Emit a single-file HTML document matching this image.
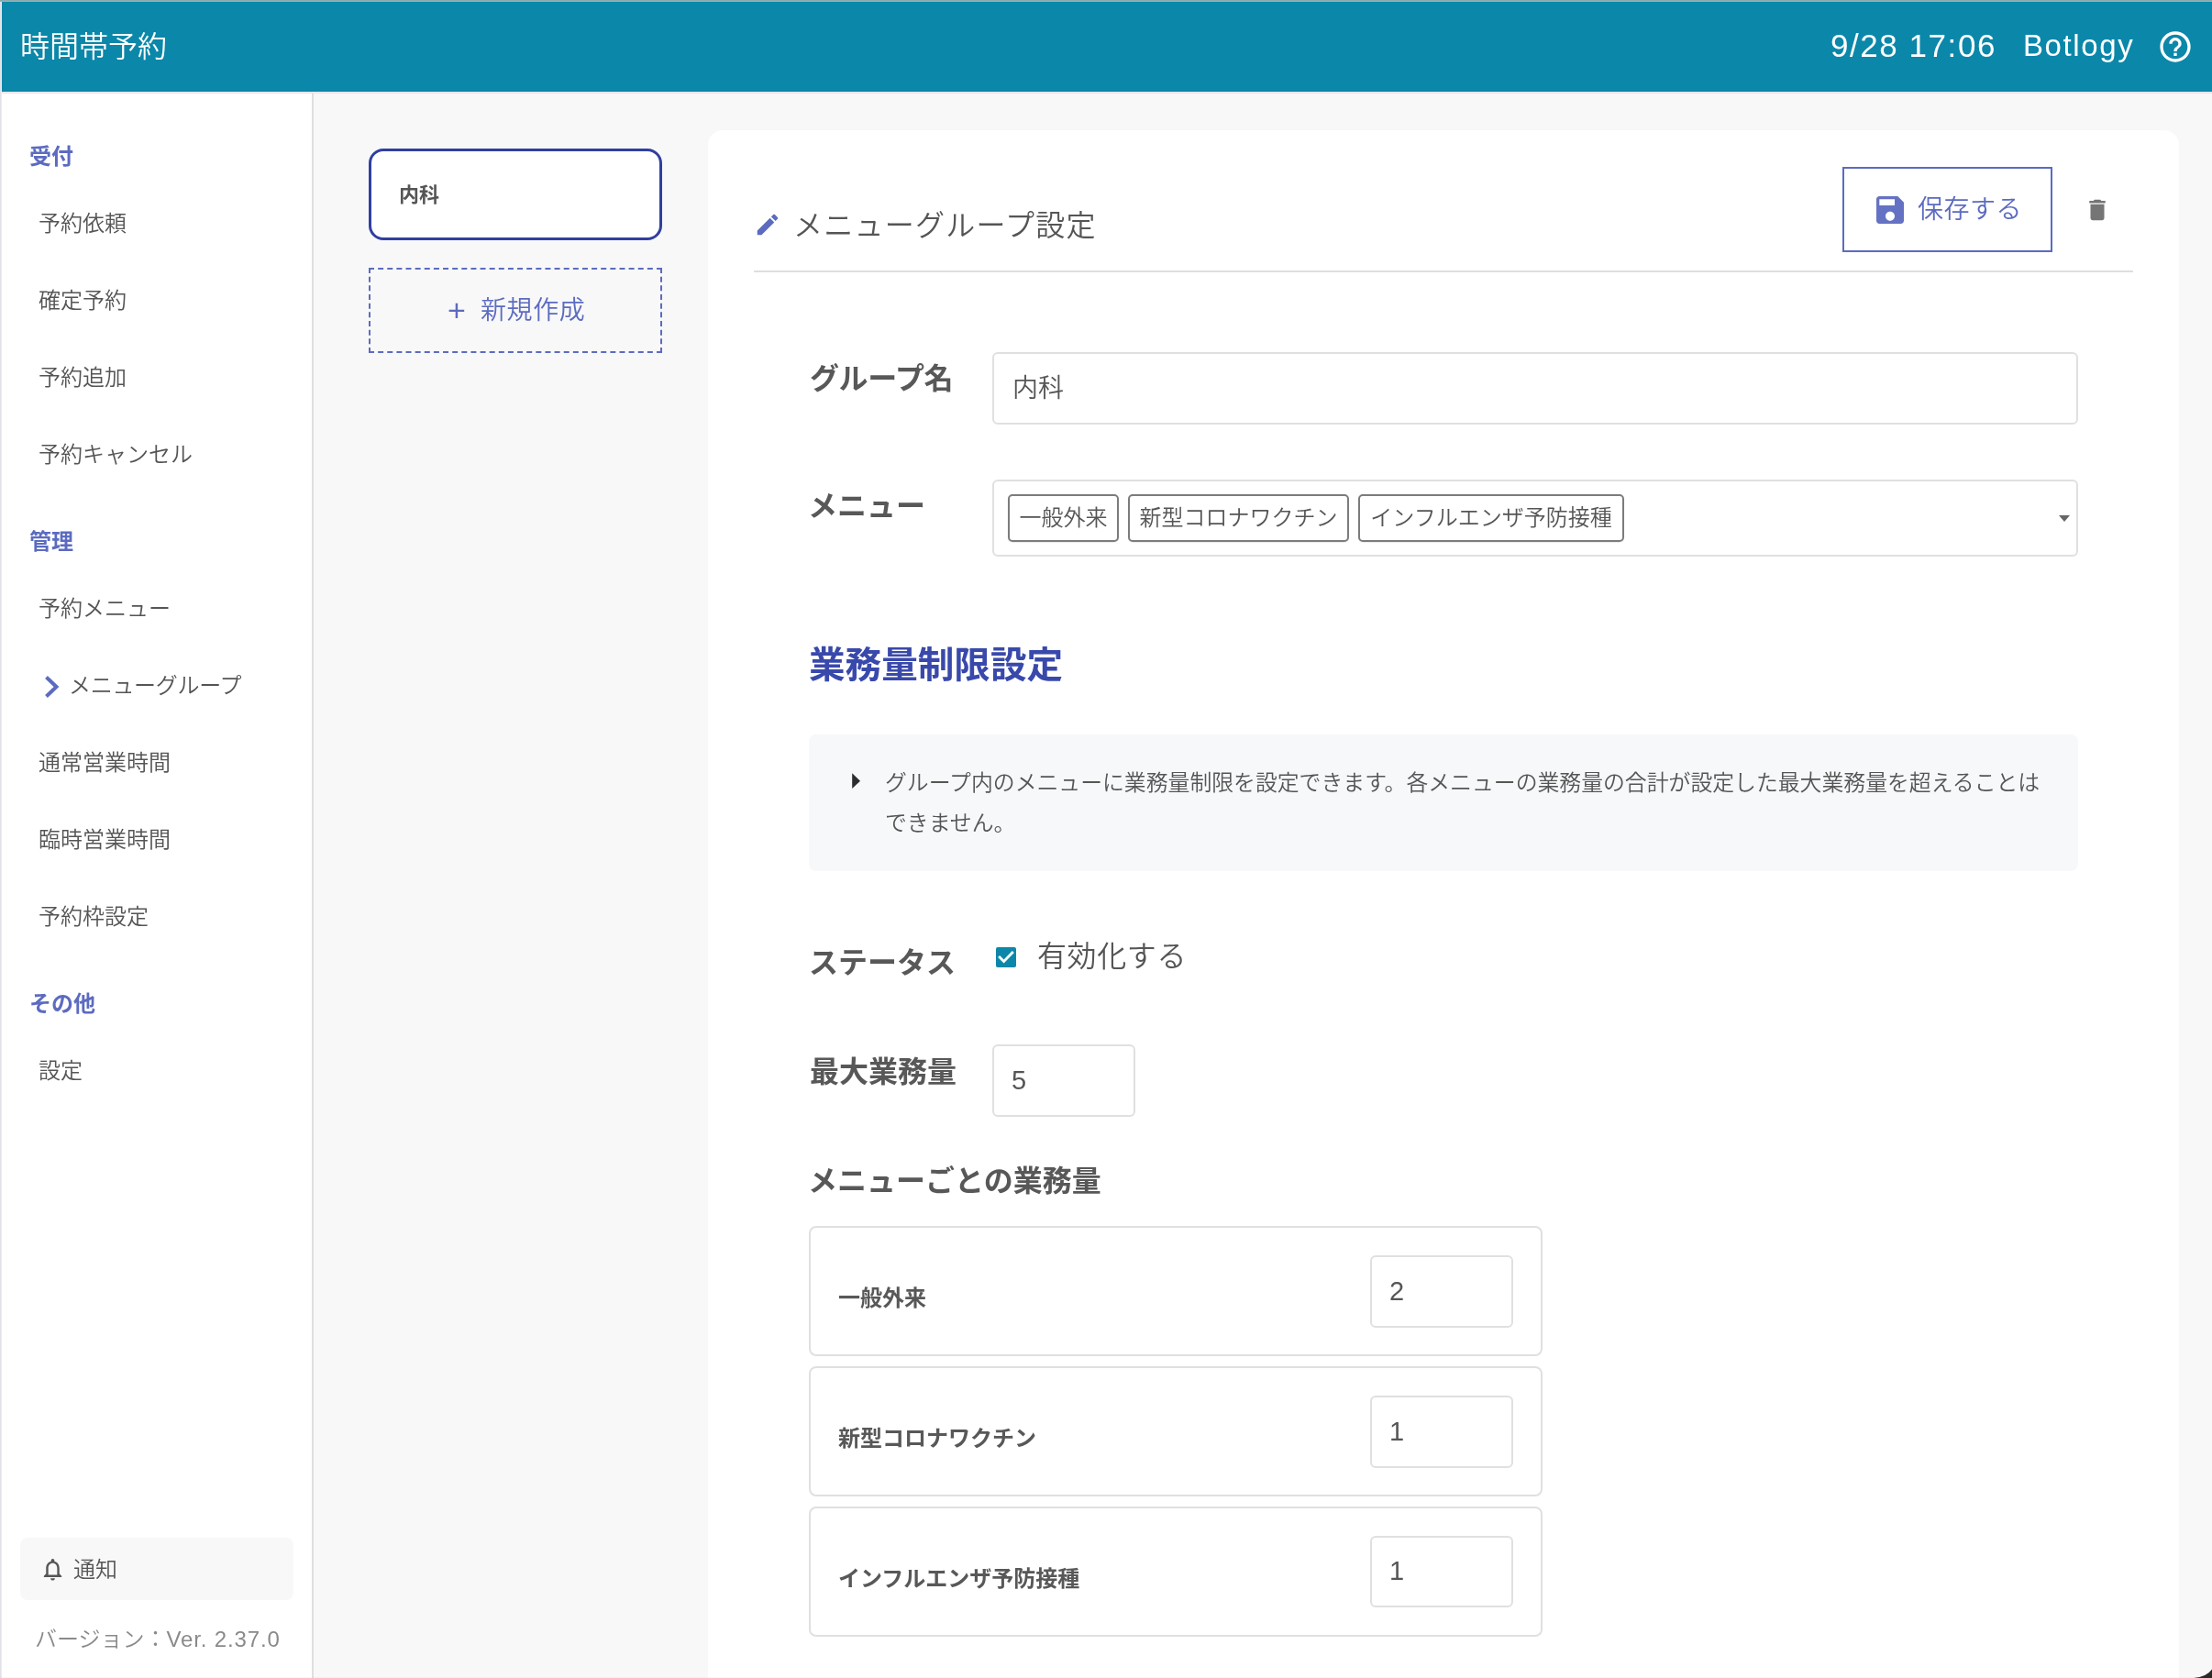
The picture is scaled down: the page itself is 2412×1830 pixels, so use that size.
<!DOCTYPE html>
<html lang="ja">
<head>
<meta charset="utf-8">
<title>時間帯予約</title>
<style>
*{box-sizing:border-box;margin:0;padding:0}
html,body{width:2412px;height:1830px;overflow:hidden;background:#f8f8f8}
body{font-family:"Liberation Sans","Noto Sans CJK JP",sans-serif;font-weight:350;color:#555;position:relative}
#app{position:absolute;left:0;top:0;width:2412px;height:1830px;overflow:hidden;background:#f8f8f8}
.a{position:absolute}
.t{position:absolute;white-space:nowrap;will-change:transform}
.b{font-weight:700}
/* frame lines */
#topline{left:0;top:0;width:2412px;height:2px;background:linear-gradient(#8aabad 0,#8aabad 50%,#99b3b4 50%,#99b3b4 100%)}
#leftline{left:0;top:2px;width:2px;height:1828px;background:linear-gradient(90deg,#e1e2e9 0,#e1e2e9 50%,#efeaed 50%,#efeaed 100%)}
/* header */
#hdr{left:2px;top:2px;width:2410px;height:98px;background:#0b87a9}
#hdrline{left:2px;top:100px;width:2410px;height:2px;background:linear-gradient(#efeaed 0,#efeaed 50%,#e1e2e9 50%,#e1e2e9 100%)}
#hdr .t{color:#fff}
/* sidebar */
#side{left:2px;top:102px;width:338px;height:1728px;background:#fff}
#sideline{left:340px;top:102px;width:2px;height:1728px;background:#dedfde}
.sh{left:32px;font-size:24px;font-weight:700;color:#5c6bc0;height:40px;line-height:40px}
.si{left:42px;font-size:24px;color:#555;height:40px;line-height:40px}
#notice{left:22px;top:1677px;width:298px;height:68px;border-radius:8px;background:#f8f8f8}
/* list column */
#sel{left:402px;top:162px;width:320px;height:100px;border:3px solid #303f9f;border-radius:16px;background:#fff}
#new{left:402px;top:292px;width:320px;height:93px;border:2px dashed #5c6bc0}
/* card */
#card{left:772px;top:142px;width:1604px;height:1720px;border-radius:16px;background:#fff}
#hr{left:822px;top:295px;width:1504px;height:2px;background:#dedede}
#save{left:2009px;top:182px;width:229px;height:93px;border:2px solid #5c6bc0;background:#fff}
.lbl{left:883px;font-size:32px;font-weight:700;color:#585858;height:48px;line-height:48px}
.inp{border:2px solid #e0e0e0;border-radius:6px;background:#fff}
.tag{will-change:transform;top:539px;height:52px;border:2px solid #7c7c7c;border-radius:5px;background:#fff;font-size:24px;line-height:48px;text-align:center;color:#555;white-space:nowrap;box-shadow:0 1px 1px rgba(0,0,0,.08)}
#info{left:882px;top:801px;width:1384px;height:149px;border-radius:8px;background:#f7f8fa}
.row{left:882px;width:800px;height:142px;border:2px solid #e0e0e0;border-radius:8px;background:#fff}
.rl{left:914px;font-size:24px;font-weight:700;color:#585858;height:40px;line-height:40px}
.num{font-size:29px;color:#555;height:40px;line-height:40px}
</style>
</head>
<body>
<div id="app">
  <div class="a" id="topline"></div>
  <div class="a" id="leftline"></div>

  <!-- header -->
  <div class="a" id="hdr">
    <div class="t" style="left:20px;top:25px;height:48px;line-height:48px;font-size:32px">時間帯予約</div>
    <div class="t" id="clock" style="left:1994px;top:24px;height:48px;line-height:48px;font-size:35px;letter-spacing:1.55px">9/28 17:06</div>
    <div class="t" id="uname" style="left:2204px;top:24px;height:48px;line-height:48px;font-size:33px;letter-spacing:1.6px">Botlogy</div>
    <svg class="a" style="left:2350px;top:29px" width="40" height="40" viewBox="0 0 24 24"><path fill="#fff" d="M11 18h2v-2h-2v2zm1-16C6.48 2 2 6.48 2 12s4.48 10 10 10 10-4.48 10-10S17.52 2 12 2zm0 18c-4.41 0-8-3.590-8-8s3.590-8 8-8 8 3.590 8 8-3.590 8-8 8zm0-14c-2.210 0-4 1.790-4 4h2c0-1.100.9-2 2-2s2 .9 2 2c0 2-3 1.750-3 5h2c0-2.250 3-2.500 3-5 0-2.210-1.790-4-4-4z"/></svg>
  </div>
  <div class="a" id="hdrline"></div>

  <!-- sidebar -->
  <div class="a" id="side"></div>
  <div class="a" id="sideline"></div>
  <div class="t sh" style="top:151px">受付</div>
  <div class="t si" style="top:224px">予約依頼</div>
  <div class="t si" style="top:308px">確定予約</div>
  <div class="t si" style="top:392px">予約追加</div>
  <div class="t si" style="top:476px">予約キャンセル</div>
  <div class="t sh" style="top:571px">管理</div>
  <div class="t si" style="top:644px">予約メニュー</div>
  <svg class="a" style="left:40px;top:733px" width="32" height="32" viewBox="0 0 32 32"><path fill="none" stroke="#5c6bc0" stroke-width="4" stroke-linejoin="miter" d="M10.500 5.500L21.500 16L10.500 26.500"/></svg>
  <div class="t si" style="left:74.500px;top:728px;letter-spacing:-0.3px">メニューグループ</div>
  <div class="t si" style="top:812px">通常営業時間</div>
  <div class="t si" style="top:896px">臨時営業時間</div>
  <div class="t si" style="top:980px">予約枠設定</div>
  <div class="t sh" style="top:1075px">その他</div>
  <div class="t si" style="top:1148px">設定</div>

  <div class="a" id="notice"></div>
  <svg class="a" style="left:42.500px;top:1696.500px" width="29" height="29" viewBox="0 0 24 24"><path fill="#555" d="M12 22c1.100 0 2-.9 2-2h-4c0 1.100.9 2 2 2zm6-6v-5c0-3.070-1.630-5.640-4.500-6.320V4c0-.830-.670-1.500-1.500-1.500s-1.500.670-1.500 1.500v.680C7.640 5.360 6 7.920 6 11v5l-2 2v1h16v-1l-2-2zm-2 1H8v-6c0-2.480 1.510-4.500 4-4.500s4 2.020 4 4.500v6z"/></svg>
  <div class="t" style="left:80px;top:1692px;height:40px;line-height:40px;font-size:24px;color:#555">通知</div>
  <div class="t" style="left:38px;top:1768px;height:40px;line-height:40px;font-size:24px;color:#8a8a8a">バージョン：<span style="letter-spacing:0.85px">Ver. 2.37.0</span></div>

  <!-- group list -->
  <div class="a" id="sel"></div>
  <div class="t b" style="left:435px;top:193px;height:40px;line-height:40px;font-size:22px;color:#555">内科</div>
  <div class="a" id="new"></div>
  <div class="t" style="left:488px;top:318px;height:40px;line-height:40px;font-size:34px;color:#5c6bc0">+</div>
  <div class="t" style="left:524px;top:319px;height:40px;line-height:40px;font-size:28px;letter-spacing:0.6px;color:#5c6bc0">新規作成</div>

  <!-- card -->
  <div class="a" id="card"></div>
  <svg class="a" style="left:822px;top:230px" width="30" height="30" viewBox="0 0 24 24"><path fill="#5c6bc0" d="M3 17.250V21h3.750L17.810 9.940l-3.750-3.750L3 17.250zM20.710 7.040c.390-.390.390-1.020 0-1.410l-2.340-2.340c-.390-.390-1.020-.390-1.410 0l-1.830 1.830 3.750 3.750 1.830-1.830z"/></svg>
  <div class="t" style="left:865px;top:222px;height:48px;line-height:48px;font-size:32px;letter-spacing:1.27px;color:#555">メニューグループ設定</div>
  <div class="a" id="save"></div>
  <svg class="a" style="left:2041px;top:209px" width="40" height="40" viewBox="0 0 24 24"><path fill="#6572c3" d="M17 3H5c-1.110 0-2 .9-2 2v14c0 1.100.890 2 2 2h14c1.100 0 2-.9 2-2V7l-4-4zm-5 16c-1.660 0-3-1.340-3-3s1.340-3 3-3 3 1.340 3 3-1.340 3-3 3zm3-10H5V5h10v4z"/></svg>
  <div class="t" style="left:2091px;top:209px;height:40px;line-height:40px;font-size:28px;letter-spacing:0.5px;color:#5c6bc0">保存する</div>
  <svg class="a" style="left:2272px;top:214px" width="30" height="30" viewBox="0 0 24 24"><path fill="#757575" d="M6 19c0 1.100.9 2 2 2h8c1.100 0 2-.9 2-2V7H6v12zM19 4h-3.500l-1-1h-5l-1 1H5v2h14V4z"/></svg>
  <div class="a" id="hr"></div>

  <!-- form -->
  <div class="t lbl" style="top:389px;letter-spacing:-0.4px">グループ名</div>
  <div class="a inp" style="left:1082px;top:384px;width:1184px;height:79px"></div>
  <div class="t" style="left:1104px;top:404px;height:40px;line-height:40px;font-size:28px;color:#555">内科</div>

  <div class="t lbl" style="left:881px;top:528px">メニュー</div>
  <div class="a inp" style="left:1082px;top:523px;width:1184px;height:84px"></div>
  <div class="a tag" style="left:1099px;width:121px">一般外来</div>
  <div class="a tag" style="left:1230px;width:241px">新型コロナワクチン</div>
  <div class="a tag" style="left:1481px;width:290px">インフルエンザ予防接種</div>
  <svg class="a" style="left:2245px;top:562px" width="12" height="7" viewBox="0 0 12 7"><path fill="#666" d="M0 0h12L6 7z"/></svg>

  <div class="t b" style="left:882px;top:695px;height:60px;line-height:60px;font-size:39.6px;color:#3949ab">業務量制限設定</div>

  <div class="a" id="info"></div>
  <svg class="a" style="left:929px;top:843px" width="10" height="17" viewBox="0 0 10 17"><path fill="#2d2d2d" d="M0.200 0.300L9 8.650L0.200 17z"/></svg>
  <div class="t" style="left:964.500px;top:832px;font-size:23.85px;line-height:44px;color:#555">グループ内のメニューに業務量制限を設定できます。各メニューの業務量の合計が設定した最大業務量を超えることは<br>できません。</div>

  <div class="t lbl" style="left:882px;top:1026px">ステータス</div>
  <div class="a" style="left:1086px;top:1033px;width:22px;height:22px;border-radius:2px;background:#0c87a9"></div>
  <svg class="a" style="left:1086px;top:1033px" width="22" height="22" viewBox="0 0 22 22"><path fill="none" stroke="#fff" stroke-width="2.800" d="M3.100 10.100L8.600 15.600L18.800 5.100"/></svg>
  <div class="t" style="left:1131px;top:1019px;height:48px;line-height:48px;font-size:32px;letter-spacing:0.6px;color:#555">有効化する</div>

  <div class="t lbl" style="top:1145px">最大業務量</div>
  <div class="a inp" style="left:1082px;top:1139px;width:156px;height:79px"></div>
  <div class="t num" style="left:1103px;top:1158px">5</div>

  <div class="t lbl" style="left:881px;top:1264px">メニューごとの業務量</div>

  <div class="a row" style="top:1337px"></div>
  <div class="t rl" style="top:1396px">一般外来</div>
  <div class="a inp" style="left:1494px;top:1369px;width:156px;height:79px"></div>
  <div class="t num" style="left:1515px;top:1388px">2</div>

  <div class="a row" style="top:1490px"></div>
  <div class="t rl" style="top:1549px">新型コロナワクチン</div>
  <div class="a inp" style="left:1494px;top:1522px;width:156px;height:79px"></div>
  <div class="t num" style="left:1515px;top:1541px">1</div>

  <div class="a row" style="top:1642.500px"></div>
  <div class="t rl" style="top:1702px">インフルエンザ予防接種</div>
  <div class="a inp" style="left:1494px;top:1674.500px;width:156px;height:78.500px"></div>
  <div class="t num" style="left:1515px;top:1693px">1</div>

  <!-- window bottom edge / corner -->
  <div class="a" style="left:0;top:1829px;width:2412px;height:1px;background:rgba(0,0,0,.025)"></div>
  <svg class="a" style="left:2382px;top:1810px" width="30" height="20" viewBox="0 0 30 20"><path fill="#2a2a27" d="M10 20Q24 19 30 10.500V20z"/></svg>
</div>
</body>
</html>
